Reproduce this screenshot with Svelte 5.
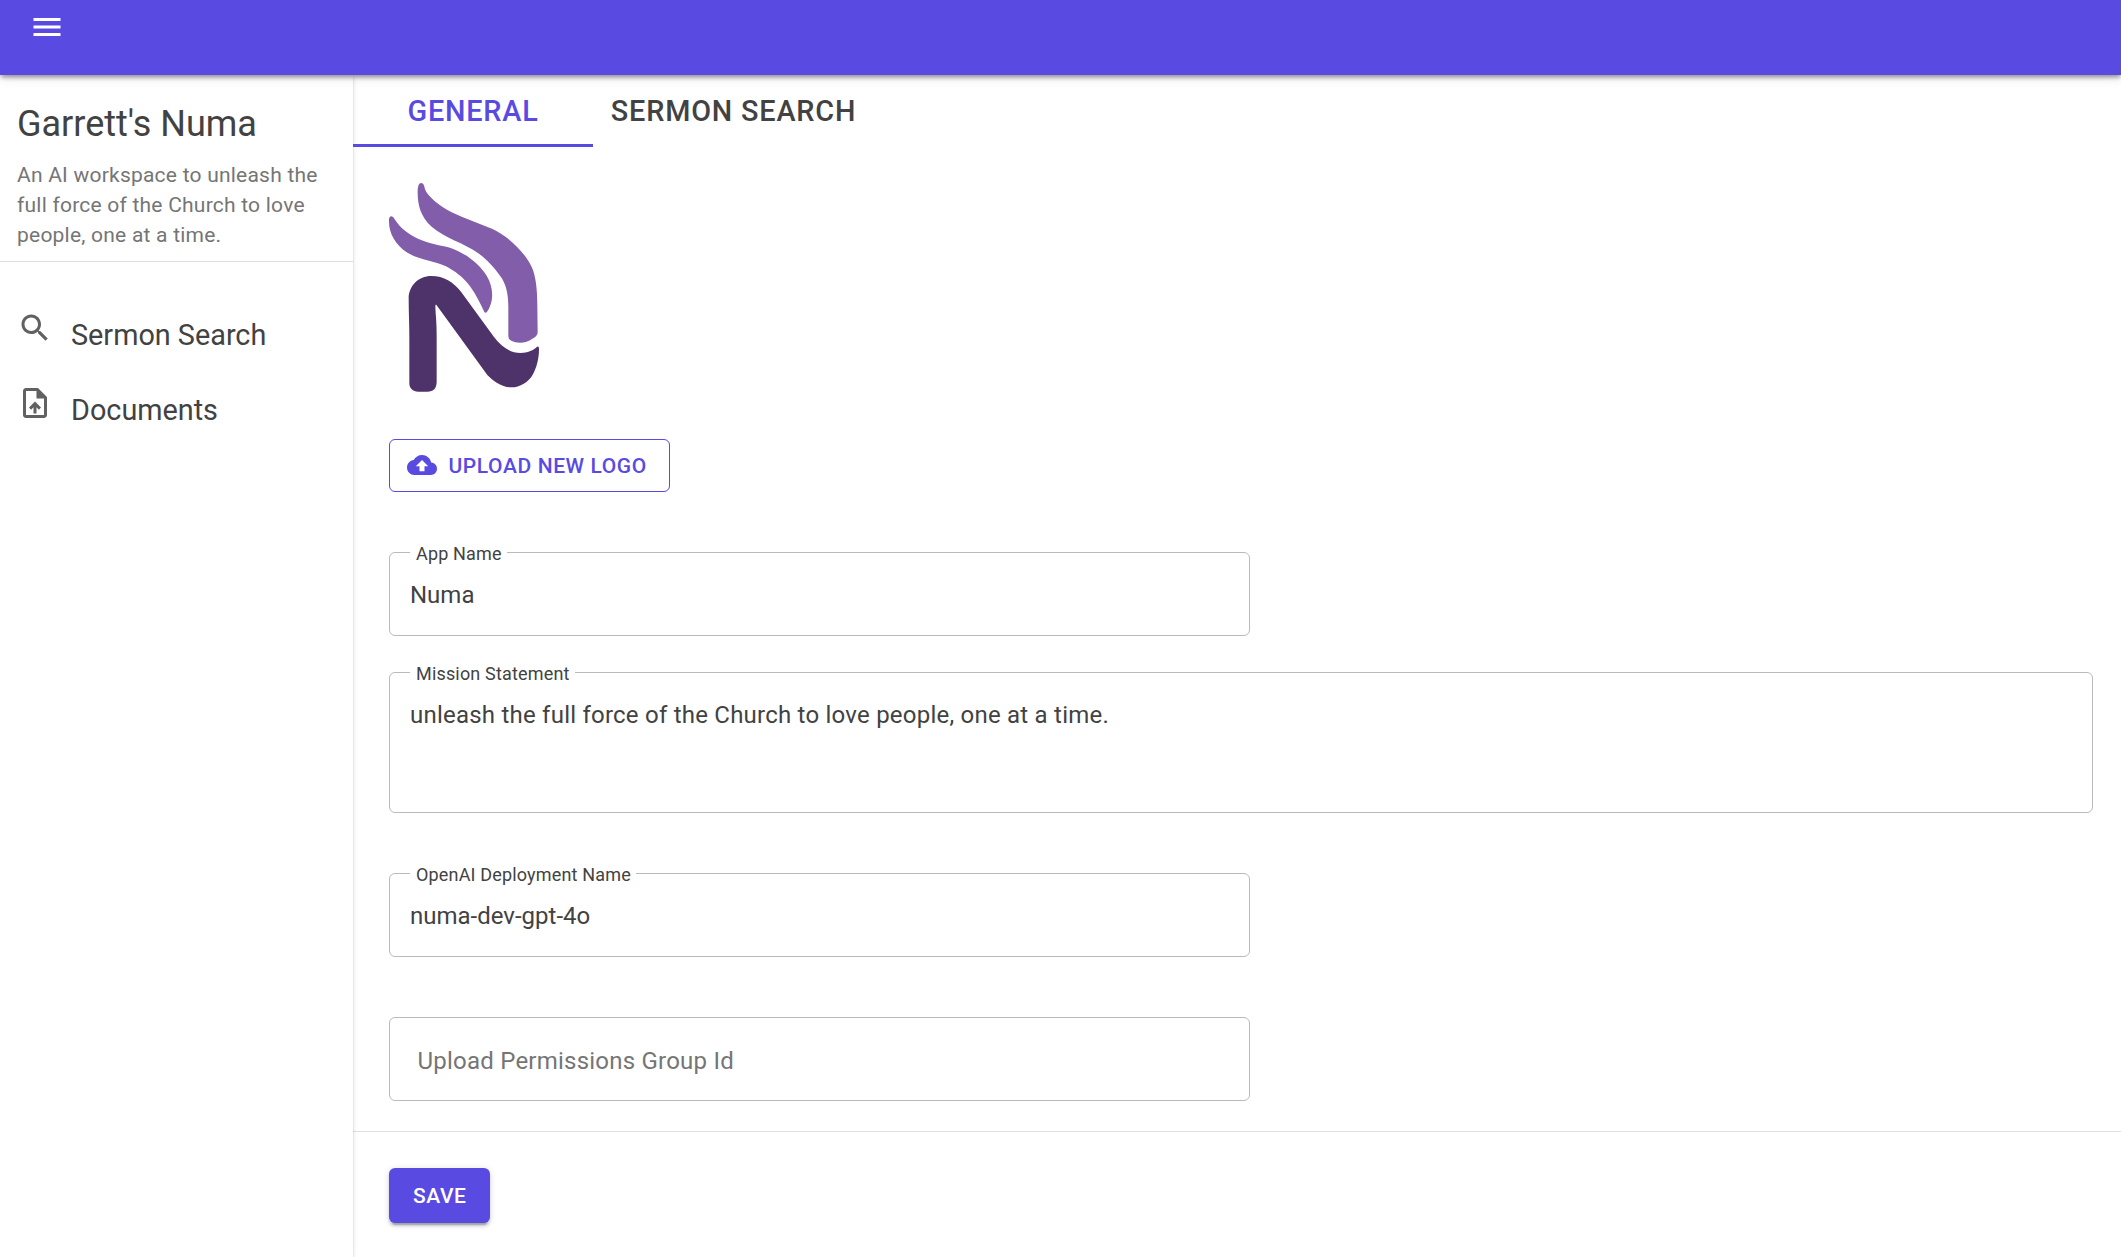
<script>
  const navItems = [
    {
      label: 'Sermon Search',
      icon: 'M15.5 14h-.79l-.28-.27C15.41 12.59 16 11.11 16 9.5 16 5.91 13.09 3 9.5 3S3 5.91 3 9.5 5.91 16 9.5 16c1.61 0 3.09-.59 4.23-1.57l.27.28v.79l5 4.99L20.49 19l-4.99-5zm-6 0C7.01 14 5 11.99 5 9.5S7.01 5 9.5 5 14 7.01 14 9.5 11.99 14 9.5 14z'
    },
    {
      label: 'Documents',
      icon: 'M14 2H6c-1.1 0-1.99.9-1.99 2L4 20c0 1.1.89 2 1.99 2H18c1.1 0 2-.9 2-2V8l-6-6zm4 18H6V4h7v5h5v11zM8 15.01l1.41 1.41L11 14.84V19h2v-4.16l1.59 1.59L16 15.01 12.01 11 8 15.01z'
    }
  ];
</script>

<div class="app">
  <header class="appbar">
    <svg class="icon" viewBox="0 0 24 24"><path d="M3 18h18v-2H3v2zm0-5h18v-2H3v2zm0-7v2h18V6H3z" /></svg>
  </header>

  <div class="body">
    <aside class="drawer">
      <div class="intro">
        <h1>Garrett's Numa</h1>
        <p>An AI workspace to unleash the full force of the Church to love people, one at a time.</p>
      </div>
      <nav>
        {#each navItems as item}
          <div class="nav-item">
            <svg class="icon" viewBox="0 0 24 24"><path d={item.icon} /></svg>
            <span>{item.label}</span>
          </div>
        {/each}
      </nav>
    </aside>

    <main>
      <div class="tabs">
        <div class="tab active">General</div>
        <div class="tab">Sermon Search</div>
      </div>

      <section class="form">
        <svg class="logo" viewBox="57 36 450 630">
          <path
            fill="#825daa"
            d="M143 68C143 50 146 39 153 39C161 39 163 48 165 58C172 78 208 108 245 127C285 146 325 160 366 176C413 197 470 250 489 300C500 333 502 375 502 410L503 485C503 497 495 501 486 507C470 520 440 521 424 512C417 509 415 504 415 494L415 410C415 370 408 340 389 316C373 293 350 268 327 251C280 217 225 205 185 170C152 140 143 105 143 68Z"
          />
          <path
            fill="#825daa"
            d="M57 155C56 146 59 139 64 139C70 139 72 146 76 151C90 172 112 192 144 206C180 222 210 225 240 233C290 250 330 285 350 317C368 347 370 380 362 403C359 412 355 421 350 427C348 429 345 429 343 426C332 403 318 373 300 349C281 322 252 302 228 289C190 271 150 271 110 247C76 222 57 190 57 155Z"
          />
          <path
            fill="#4e336b"
            d="M116 385C116 348 145 318 184 318C222 318 250 336 273 365L372 501C395 530 420 549 452 549C474 548 488 541 498 533C504 527 507 529 507 537C507 565 500 593 488 614C476 636 450 652 424 652C396 652 371 635 352 615L201 407C199 403 196 404 196 409C197 440 200 450 200 500L200 635C200 654 191 665 172 665L145 665C128 665 118 655 118 640L118 500C118 460 116 425 116 385Z"
          />
        </svg>

        <button class="upload">
          <svg viewBox="0 0 24 24"
            ><path
              d="M19.35 10.04C18.67 6.59 15.64 4 12 4 9.11 4 6.6 5.64 5.35 8.04 2.34 8.36 0 10.91 0 14c0 3.31 2.69 6 6 6h13c2.76 0 5-2.24 5-5 0-2.64-2.05-4.78-4.65-4.96zM14 13v4h-4v-4H7l5-5 5 5h-3z"
            /></svg
          >
          <span>Upload new logo</span>
        </button>

        <div class="field">
          <span class="label">App Name</span>
          <div class="value">Numa</div>
        </div>
        <div class="field mission">
          <span class="label">Mission Statement</span>
          <div class="value">unleash the full force of the Church to love people, one at a time.</div>
        </div>
        <div class="field deployment">
          <span class="label">OpenAI Deployment Name</span>
          <div class="value">numa-dev-gpt-4o</div>
        </div>
        <div class="field group">
          <div class="placeholder">Upload Permissions Group Id</div>
        </div>
      </section>

      <footer>
        <button class="save">Save</button>
      </footer>
    </main>
  </div>
</div>

<style>
  :global(body) {
    background: #fff;
    overflow: hidden;
  }
  .app {
    height: 1257px;
    display: flex;
    flex-direction: column;
    font-family: Roboto, 'Liberation Sans', sans-serif;
    color: #424242;
  }
  .app * {
    box-sizing: border-box;
  }
  .icon {
    width: 36px;
    height: 36px;
    flex: none;
    fill: currentColor;
  }
  .appbar {
    position: relative;
    z-index: 3;
    flex: none;
    height: 75px;
    padding: 9px 28.5px;
    background: #594ae2;
    color: #fff;
    box-shadow:
      0 3px 4px -1.5px rgba(0, 0, 0, 0.26),
      0 3px 4px 0 rgba(0, 0, 0, 0.14),
      0 1.5px 12px 0 rgba(0, 0, 0, 0.12);
  }
  .body {
    flex: 1;
    display: flex;
    min-height: 0;
  }
  .drawer {
    position: relative;
    z-index: 1;
    width: 353px;
    flex: none;
    background: #fff;
    box-shadow:
      0 3px 1.5px -1.5px rgba(0, 0, 0, 0.2),
      0 1.5px 1.5px 0 rgba(0, 0, 0, 0.14),
      0 1.5px 4.5px 0 rgba(0, 0, 0, 0.14);
  }
  .intro {
    height: 187px;
    padding: 25px 17px 0;
    border-bottom: 1px solid #e0e0e0;
  }
  h1 {
    margin: 0 0 12px;
    font-size: 36px;
    font-weight: 400;
    line-height: 48px;
  }
  p {
    margin: 0;
    font-size: 21px;
    line-height: 30px;
    letter-spacing: 0.01071em;
    color: #757575;
  }
  nav {
    padding: 36px 17px;
  }
  .nav-item {
    display: flex;
    height: 75px;
    padding-top: 12px;
    gap: 18px;
    font-size: 28.8px;
    line-height: 36px;
  }
  .nav-item .icon {
    color: #616161;
  }
  .nav-item span {
    padding-top: 7px;
  }
  main {
    flex: 1;
    display: flex;
    flex-direction: column;
    min-width: 0;
  }
  .tabs {
    position: relative;
    z-index: 2;
    display: flex;
    height: 72px;
    flex: none;
  }
  .tab {
    height: 72px;
    padding-top: 18px;
    text-align: center;
    width: 240px;
    font-size: 28.8px;
    font-weight: 500;
    line-height: 36px;
    letter-spacing: 0.02857em;
    text-transform: uppercase;
  }
  .tab + .tab {
    width: 281px;
    white-space: nowrap;
  }
  .active {
    color: #594ae2;
    border-bottom: 3px solid #594ae2;
  }
  .form {
    height: 985px;
    padding: 35px 28px 0 36px;
    border-bottom: 1px solid #e0e0e0;
    display: flex;
    flex-direction: column;
    align-items: flex-start;
    flex: none;
  }
  .logo {
    width: 150px;
    height: 210px;
    flex: none;
  }
  button {
    display: flex;
    align-items: center;
    font: 500 21px/36px Roboto, 'Liberation Sans', sans-serif;
    letter-spacing: 0.02857em;
    text-transform: uppercase;
    border-radius: 6px;
    flex: none;
  }
  .upload {
    width: 281px;
    height: 53px;
    margin: 47px 0 60px;
    padding: 0 17px;
    gap: 11.5px;
    background: #fff;
    color: #594ae2;
    border: 1px solid #594ae2;
    white-space: nowrap;
  }
  .upload svg {
    width: 30px;
    height: 30px;
    flex: none;
    margin-top: -1px;
    fill: currentColor;
  }
  .field {
    position: relative;
    flex: none;
    width: 861px;
    height: 84px;
    padding: 28px 20px 0;
    border: 1px solid #bababa;
    border-radius: 6px;
    font-size: 24px;
    line-height: 28px;
  }
  .mission {
    width: 100%;
    height: 141px;
    margin: 36px 0 60px;
    letter-spacing: 0.00938em;
  }
  .group {
    margin-top: 60px;
    padding: 29px 27.5px 0;
    color: #757575;
    letter-spacing: 0.00938em;
  }
  .label {
    position: absolute;
    left: 20px;
    top: -8px;
    padding: 0 5px 0 6px;
    background: #fff;
    font-size: 18px;
    line-height: 18px;
    letter-spacing: 0.00938em;
  }
  footer {
    padding: 36px;
  }
  .save {
    justify-content: center;
    width: 101px;
    height: 55px;
    padding: 0 0 0 0.5px;
    border: 0;
    background: #594ae2;
    color: #fff;
    box-shadow:
      0 4.5px 1.5px -3px rgba(0, 0, 0, 0.2),
      0 3px 3px 0 rgba(0, 0, 0, 0.14),
      0 1.5px 7.5px 0 rgba(0, 0, 0, 0.12);
  }
</style>
